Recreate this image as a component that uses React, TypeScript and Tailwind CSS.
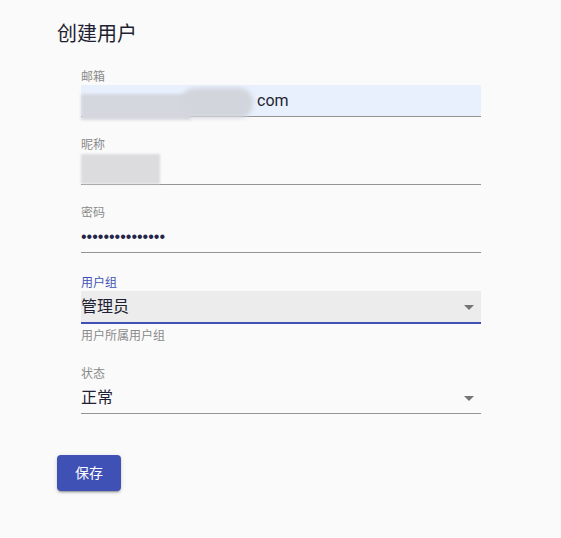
import React from "react";

const font = { fontFamily: 'Roboto, "Noto Sans CJK SC", sans-serif' };

function Arrow() {
  return (
    <svg viewBox="0 0 24 24" className="h-6 w-6 shrink-0 fill-[#757575]">
      <path d="M7 10l5 5 5-5z" />
    </svg>
  );
}

function Label({ children, active }: { children: React.ReactNode; active?: boolean }) {
  return (
    <div className={`h-4 text-[12px] leading-4 ${active ? "text-[#3f51b5]" : "text-[#8a8a8a]"}`}>
      {children}
    </div>
  );
}

export default function App() {
  return (
    <div className="min-h-screen w-full bg-[#fafafa] text-[#1f1f33]" style={font}>
      <h1 className="pl-[57px] pt-[20px] text-[20px] leading-[28px] font-normal">创建用户</h1>

      <div className="ml-[81px] mt-[21px] w-[400px]">
        {/* 邮箱 */}
        <Label>邮箱</Label>
        <div className="flex h-8 items-center border-b border-[#949494] bg-[#e8f0fe] text-[16px]">
          <div className="relative h-[30px] w-[176px] mt-[4px]">
            <div className="absolute left-0 top-[6px] h-[26px] w-[110px] bg-[#d4d7de] blur-[1.5px]" />
            <div className="absolute left-[100px] top-[0px] h-[30px] w-[72px] rounded-[14px] bg-[#d2d5dc] blur-[2px]" />
          </div>
          <span className="ml-[0px] leading-none">com</span>
        </div>

        {/* 昵称 */}
        <div className="mt-5">
          <Label>昵称</Label>
          <div className="flex h-8 items-center border-b border-[#949494]">
            <div className="h-[30px] w-[79px] bg-[#dcdcdf] blur-[1px]" />
          </div>
        </div>

        {/* 密码 */}
        <div className="mt-5">
          <Label>密码</Label>
          <div className="flex h-8 items-center border-b border-[#949494]">
            <span className="text-[16px] leading-none text-[#25254a]" style={{ fontFamily: '"Liberation Sans", sans-serif' }}>
              •••••••••••••••
            </span>
          </div>
        </div>

        {/* 用户组 */}
        <div className="mt-[22px]">
          <Label active>用户组</Label>
          <div className="flex h-[33px] items-center justify-between border-b-2 border-[#3f51b5] bg-[#ececec] pt-[1px]">
            <span className="text-[16px] leading-none">管理员</span>
            <Arrow />
          </div>
          <div className="mt-1 h-4 text-[12px] leading-4 text-[#8a8a8a]">用户所属用户组</div>
        </div>

        {/* 状态 */}
        <div className="mt-[22px]">
          <Label>状态</Label>
          <div className="flex h-8 items-center justify-between border-b border-[#949494]">
            <span className="text-[16px] leading-none">正常</span>
            <Arrow />
          </div>
        </div>
      </div>

      <div className="ml-[57px] mt-[41px]">
        <button className="h-9 w-16 rounded bg-[#3f51b5] text-[14px] text-white shadow-[0_3px_1px_-2px_rgba(0,0,0,0.2),0_2px_2px_0_rgba(0,0,0,0.14),0_1px_5px_0_rgba(0,0,0,0.12)]">
          保存
        </button>
      </div>
    </div>
  );
}
